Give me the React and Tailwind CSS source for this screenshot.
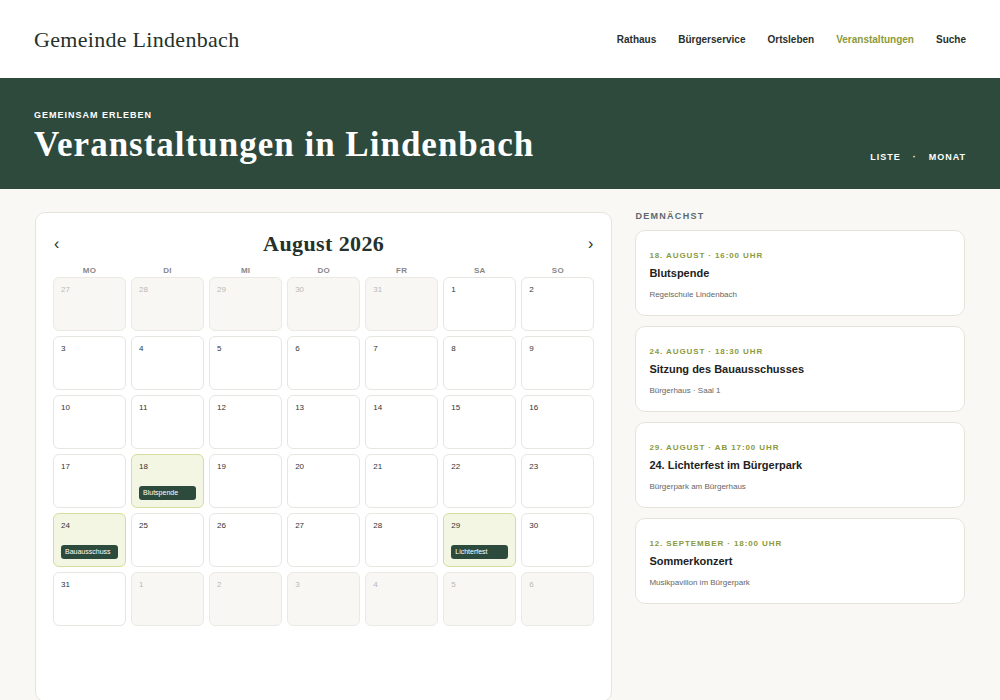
import React from 'react';

const serif = { fontFamily: 'Georgia, "Liberation Serif", "DejaVu Serif", serif' };

const navItems = ['Rathaus', 'Bürgerservice', 'Ortsleben', 'Veranstaltungen', 'Suche'];
const weekdays = ['MO', 'DI', 'MI', 'DO', 'FR', 'SA', 'SO'];

// August 2026 starts on a Saturday, so the grid opens with the tail of July
const buildDays = () => {
  const days = [];
  [27, 28, 29, 30, 31].forEach((d) => days.push({ day: d, muted: true }));
  for (let d = 1; d <= 31; d++) days.push({ day: d, muted: false });
  [1, 2, 3, 4, 5, 6].forEach((d) => days.push({ day: d, muted: true }));
  return days;
};

const calendarEvents = {
  18: 'Blutspende',
  24: 'Bauausschuss',
  29: 'Lichterfest',
};

const upcoming = [
  { when: '18. August · 16:00 Uhr', title: 'Blutspende', place: 'Regelschule Lindenbach' },
  { when: '24. August · 18:30 Uhr', title: 'Sitzung des Bauausschusses', place: 'Bürgerhaus · Saal 1' },
  { when: '29. August · ab 17:00 Uhr', title: '24. Lichterfest im Bürgerpark', place: 'Bürgerpark am Bürgerhaus' },
  { when: '12. September · 18:00 Uhr', title: 'Sommerkonzert', place: 'Musikpavillon im Bürgerpark' },
];

const DayCell = ({ day, muted }) => {
  const event = !muted && calendarEvents[day];
  let cls = 'bg-white border-[#e8e6e0]';
  if (muted) cls = 'bg-[#f8f7f4] border-[#ebe9e3]';
  if (event) cls = 'bg-[#f3f6e2] border-[#d6dd9c]';
  return (
    <div className={`h-[54px] rounded-[6px] border flex flex-col justify-between px-[7px] pt-[7px] pb-[7px] ${cls}`}>
      <span className={`text-[8px] leading-[10px] ${muted ? 'text-[#b9b9b5]' : 'text-[#333]'}`}>{day}</span>
      {event && (
        <span className="block rounded-[3px] bg-[#2d4b3d] text-white text-[7px] leading-[14px] px-[4px]">
          {event}
        </span>
      )}
    </div>
  );
};

export default function App() {
  const days = buildDays();

  return (
    <div className="min-h-screen bg-[#f9f8f4] text-[#222]" style={{ fontFamily: '"Liberation Sans", Arial, sans-serif' }}>
      {/* top bar */}
      <header className="h-[78px] bg-white flex items-center justify-between px-[34px]">
        <div className="text-[22px] text-[#24322b] tracking-[0.3px]" style={serif}>Gemeinde Lindenbach</div>
        <nav className="flex gap-[22px] text-[10px] font-bold">
          {navItems.map((item) => (
            <a key={item} className={item === 'Veranstaltungen' ? 'text-[#8a9a3c]' : 'text-[#2a2f2c]'}>
              {item}
            </a>
          ))}
        </nav>
      </header>

      {/* hero band */}
      <section className="h-[111px] bg-[#2d4a3c] flex items-end justify-between px-[34px] pb-[25px]">
        <div>
          <div className="text-[9px] font-bold tracking-[1px] text-white mb-[3px]">GEMEINSAM ERLEBEN</div>
          <h1 className="text-[35px] leading-[39px] font-bold text-white tracking-[1px]" style={serif}>
            Veranstaltungen in Lindenbach
          </h1>
        </div>
        <div className="flex gap-[12px] text-[9px] font-bold tracking-[1px] text-white">
          <span>LISTE</span>
          <span>·</span>
          <span>MONAT</span>
        </div>
      </section>

      {/* body */}
      <main className="flex gap-[23px] px-[35px] pt-[23px]">
        <div className="w-[578px] h-[490px] bg-white rounded-[10px] border border-[#e6e4dd] px-[17px] pt-[14px]">
          <div className="flex items-center justify-between px-[1px]">
            <button className="text-[16px] text-[#2a2f2c] leading-none">‹</button>
            <h2 className="text-[22px] font-bold text-[#24322b] tracking-[0.4px]" style={serif}>August 2026</h2>
            <button className="text-[16px] text-[#2a2f2c] leading-none">›</button>
          </div>
          <div className="grid grid-cols-7 gap-x-[5px] mt-[5px]">
            {weekdays.map((w) => (
              <div key={w} className="text-center text-[8px] font-bold text-[#888] tracking-[0.3px]">{w}</div>
            ))}
          </div>
          <div className="grid grid-cols-7 gap-[5px]">
            {days.map((d, i) => (
              <DayCell key={i} day={d.day} muted={d.muted} />
            ))}
          </div>
        </div>

        <aside className="w-[330px]">
          <div className="text-[9px] font-bold tracking-[1.3px] text-[#5c6870] mt-[-2px] mb-[6px]">DEMNÄCHST</div>
          <div className="flex flex-col gap-[10px]">
            {upcoming.map((ev) => (
              <div key={ev.title} className="h-[86px] bg-white rounded-[10px] border border-[#e6e4da] px-[13px] pt-[19px]">
                <div className="text-[8px] font-bold tracking-[0.9px] uppercase text-[#8a9a3c]">{ev.when}</div>
                <div className="text-[11px] font-bold text-[#222] mt-[3px]">{ev.title}</div>
                <div className="text-[8px] text-[#666] mt-[8px]">{ev.place}</div>
              </div>
            ))}
          </div>
        </aside>
      </main>
    </div>
  );
}
